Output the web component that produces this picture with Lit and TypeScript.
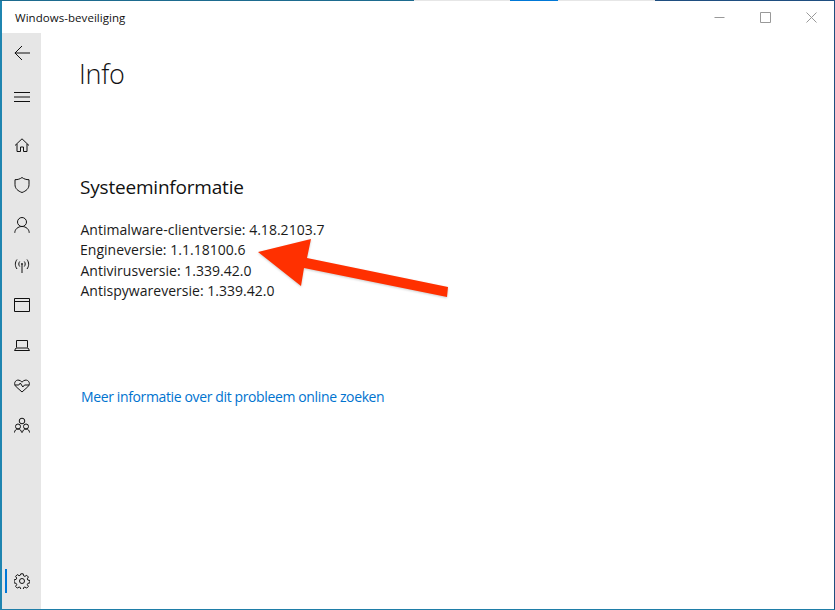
import { LitElement, html, css, svg } from "lit";
import { customElement } from "lit/decorators.js";

const icons = [
  svg`<path d="M15 8.500 8 1.800 1 8.500M3 7v7.500h3.500v-4.500h3v4.500H13V7"/>`,
  svg`<path d="M8 .5c2 1.500 4.200 2.200 7 2.200v5c0 3.800-2.800 6.300-7 7.800-4.200-1.500-7-4-7-7.800v-5c2.800 0 5-.7 7-2.200z"/>`,
  svg`<circle cx="8" cy="5" r="4.500"/><path d="M.8 15.800c0-3.600 3.200-6.300 7.200-6.300s7.200 2.700 7.200 6.300"/>`,
  svg`<path d="M8 7.500v8.500M5.700 4.500c-1.200 1.500-1.200 3.500 0 5M10.300 4.500c1.200 1.500 1.200 3.500 0 5M3 2.500c-2.200 3-2.200 6.500 0 9.500M13 2.500c2.200 3 2.200 6.500 0 9.500"/><circle cx="8" cy="7" r=".6"/>`,
  svg`<path d="M.5 1.500h15v13H.5zM.5 4.500h15"/>`,
  svg`<path d="M2.500 10.500V3.500h11v7M.5 13.500h15l-1.500-2.500H2z"/>`,
  svg`<path d="M8 15 2.200 9.800C.8 8.500.3 7 .8 5.500 1.500 3.600 3.200 2.800 5 3.200c1.200.3 2.200 1 3 2 .8-1 1.800-1.700 3-2 1.800-.4 3.500.4 4.200 2.300.5 1.500 0 3-1.400 4.300zM.8 8h4l1.500-2 2.500 4 1.700-2h4.700"/>`,
  svg`<circle cx="8" cy="4" r="2.800"/><circle cx="4" cy="9.500" r="2.500"/><circle cx="12" cy="9.500" r="2.500"/><path d="M.5 15.500c0-2 1.500-3.500 3.500-3.500s3.500 1.500 3.500 3.500M8.500 15.500c0-2 1.500-3.500 3.500-3.500s3.500 1.500 3.500 3.500"/>`,
];

@customElement("app-root")
export class AppRoot extends LitElement {
  static styles = css`
    :host {
      display: block;
      position: relative;
      width: 835px;
      height: 610px;
      overflow: hidden;
      background: #fff;
      font-family: "Open Sans", "Noto Sans", sans-serif;
      color: #1a1a1a;
      box-sizing: border-box;
    }
    .frame {
      width: 835px;
      height: 610px;
      display: flex;
      flex-direction: column;
      box-sizing: border-box;
      border-left: 2px solid #1f85b0;
      border-right: 1px solid #1f4e80;
      border-bottom: 1px solid #1f7ea8;
    }
    .strip {
      display: flex;
      height: 1px;
      margin: 0 -1px 0 -2px;
      flex: none;
    }
    .s1 { width: 414px; background: #1d6b8f; }
    .s2 { width: 96px; background: #e6e6e6; }
    .s3 { width: 48px; background: #0078d7; }
    .s4 { width: 97px; background: #e6e6e6; }
    .s5 { flex: 1; background: #1f4e80; }
    .title {
      height: 32px;
      flex: none;
      display: flex;
      align-items: center;
      justify-content: space-between;
    }
    .app-name {
      margin-left: 13px;
      font-size: 11.500px;
      letter-spacing: 0.05px;
      color: #111;
    }
    .controls { display: flex; }
    .ctl {
      width: 46px;
      height: 32px;
      display: flex;
      align-items: center;
      justify-content: center;
    }
    .ctl svg { width: 11px; height: 11px; stroke: #999; fill: none; stroke-width: 1; }
    .body { flex: 1; display: flex; min-height: 0; }
    nav {
      width: 39px;
      flex: none;
      background: #e6e6e6;
      display: flex;
      flex-direction: column;
      align-items: center;
    }
    .back { height: 40px; display: flex; align-items: center; }
    .menu { height: 48px; display: flex; align-items: center; }
    .list { display: flex; flex-direction: column; margin-top: 4px; }
    .item {
      height: 40px;
      display: flex;
      align-items: center;
      justify-content: center;
    }
    nav svg { width: 16px; height: 16px; fill: none; stroke: #111; stroke-width: 1; }
    .settings {
      margin-top: auto;
      height: 36px;
      margin-bottom: 10px;
      align-self: stretch;
      display: flex;
      align-items: center;
      justify-content: center;
      position: relative;
    }
    .marker {
      position: absolute;
      left: 3px;
      top: 6px;
      width: 2px;
      height: 24px;
      background: #0078d7;
    }
    main { flex: 1; padding: 0 0 0 38px; display: flex; flex-direction: column; }
    h1 {
      margin: 20px 0 0;
      font-size: 27px;
      font-weight: 300;
      line-height: 42px;
      color: #111;
      letter-spacing: -0.3px;
    }
    h2 {
      margin: 79px 0 0 1px;
      font-size: 19px;
      font-weight: 400;
      line-height: 26px;
      color: #111;
      letter-spacing: -0.2px;
    }
    .info { margin-top: 20px; font-size: 14px; line-height: 20.400px; letter-spacing: 0.02px; margin-left: 1.500px; }
    .info div:nth-child(2) { margin-left: -0.500px; }
    .link {
      margin: 85px 0 0 2px;
      font-size: 14px;
      line-height: 20px;
      color: #0073cf;
      letter-spacing: -0.37px;
      text-decoration: none;
    }
    .arrow { position: absolute; left: 0; top: 0; width: 835px; height: 610px; pointer-events: none; }
    .arrow polygon { fill: #ff3000; filter: drop-shadow(0.5px 1px 1px rgba(0,0,0,.2)); }
  `;

  render() {
    return html`
      <div class="frame">
        <div class="strip"><i class="s1"></i><i class="s2"></i><i class="s3"></i><i class="s4"></i><i class="s5"></i></div>
        <div class="title">
          <span class="app-name">Windows-beveiliging</span>
          <div class="controls">
            <div class="ctl"><svg viewBox="0 0 11 11"><path d="M.5 5.500h10"/></svg></div>
            <div class="ctl"><svg viewBox="0 0 11 11"><path d="M.5.500h10v10H.5z"/></svg></div>
            <div class="ctl"><svg viewBox="0 0 11 11"><path d="M.5.500l10 10M10.500.500l-10 10"/></svg></div>
          </div>
        </div>
        <div class="body">
          <nav>
            <div class="back"><svg viewBox="0 0 16 16"><path d="M16 8H.8M8 1 1 8l7 7"/></svg></div>
            <div class="menu"><svg viewBox="0 0 16 16"><path d="M0 3.500h16M0 8h16M0 12.500h16"/></svg></div>
            <div class="list">
              ${icons.map((p) => html`<div class="item"><svg viewBox="0 0 16 16">${p}</svg></div>`)}
            </div>
            <div class="settings">
              <span class="marker"></span>
              <svg viewBox="0 0 16 16"><circle cx="8" cy="8" r="2.500"/><path d="M6.800.8h2.400l.4 2 1.300.6 1.800-1.100 1.700 1.700-1.100 1.800.6 1.300 2 .4v2.400l-2 .4-.6 1.300 1.100 1.800-1.700 1.700-1.800-1.100-1.300.6-.4 2H6.800l-.4-2-1.300-.6-1.800 1.100-1.700-1.700 1.100-1.800-.6-1.300-2-.4V6.800l2-.4.6-1.300-1.100-1.800 1.700-1.700 1.800 1.100 1.300-.6z"/></svg>
            </div>
          </nav>
          <main>
            <h1>Info</h1>
            <h2>Systeeminformatie</h2>
            <div class="info">
              <div>Antimalware-clientversie: 4.18.2103.7</div>
              <div>Engineversie: 1.1.18100.6</div>
              <div>Antivirusversie: 1.339.42.0</div>
              <div>Antispywareversie: 1.339.42.0</div>
            </div>
            <a class="link" href="#">Meer informatie over dit probleem online zoeken</a>
          </main>
        </div>
      </div>
      <svg class="arrow" viewBox="0 0 835 610">
        <polygon points="258,252 311,239 307,258 448,287 447,297 304,268 301,286"/>
      </svg>
    `;
  }
}
